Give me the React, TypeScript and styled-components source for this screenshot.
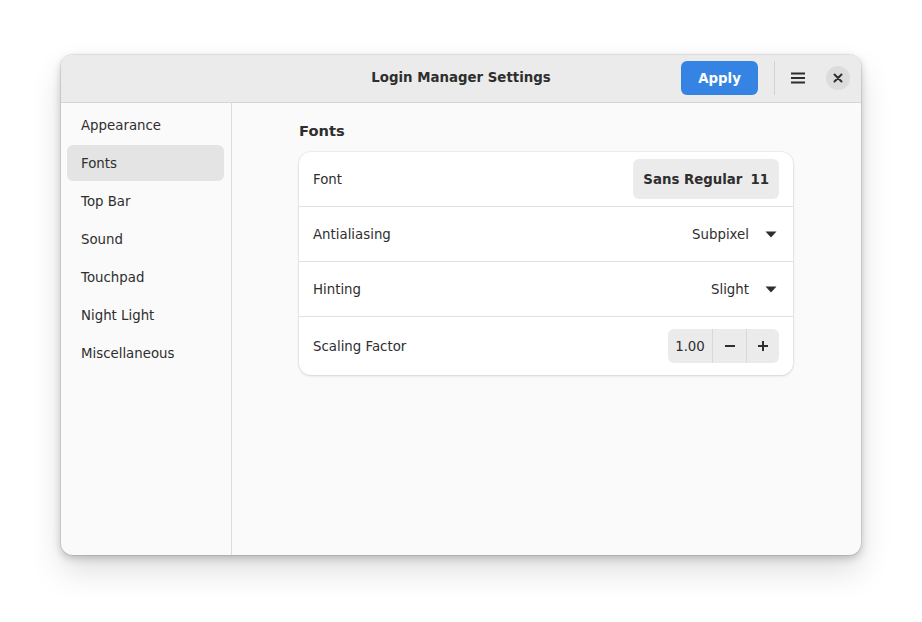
import React, { FC, useState } from 'react';
import styled, { createGlobalStyle } from 'styled-components';

const GlobalStyle = createGlobalStyle`
	html, body {
		margin: 0;
		padding: 0;
		background: #ffffff;
	}
	body {
		font-family: 'DejaVu Sans', 'Liberation Sans', sans-serif;
		font-size: 10pt;
		color: #2e2e2e;
	}
`;

const navItems = ['Appearance', 'Fonts', 'Top Bar', 'Sound', 'Touchpad', 'Night Light', 'Miscellaneous'];

const App: FC = () => {
	const [active, setActive] = useState<string>('Fonts');
	const [scale, setScale] = useState<number>(1);

	return (
		<>
			<GlobalStyle />
			<Page>
				<Window>
					<HeaderBar>
						<Title>Login Manager Settings</Title>
						<HeaderActions>
							<ApplyButton>Apply</ApplyButton>
							<HeaderSeparator />
							<IconButton aria-label="Menu">
								<svg width="16" height="16" viewBox="0 0 16 16">
									<rect x="1" y="2.5" width="14" height="2" fill="#2e2e2e" />
									<rect x="1" y="7" width="14" height="2" fill="#2e2e2e" />
									<rect x="1" y="11.5" width="14" height="2" fill="#2e2e2e" />
								</svg>
							</IconButton>
							<CloseButton aria-label="Close">
								<svg width="10" height="10" viewBox="0 0 10 10">
									<path d="M1.5 1.5 L8.5 8.5 M8.5 1.5 L1.5 8.5" stroke="#2e2e2e" strokeWidth="2" strokeLinecap="round" />
								</svg>
							</CloseButton>
						</HeaderActions>
					</HeaderBar>
					<Body>
						<Sidebar>
							{navItems.map((el) => (
								<NavItem key={el} $active={el === active} onClick={() => setActive(el)}>
									{el}
								</NavItem>
							))}
						</Sidebar>
						<Content>
							<Section>
								<SectionTitle>Fonts</SectionTitle>
								<Card>
									<Row $height={54}>
										<RowLabel>Font</RowLabel>
										<FontButton>
											<span>Sans Regular</span>
											<span>11</span>
										</FontButton>
									</Row>
									<Row $height={54}>
										<RowLabel>Antialiasing</RowLabel>
										<Dropdown>
											Subpixel
											<Arrow />
										</Dropdown>
									</Row>
									<Row $height={54}>
										<RowLabel>Hinting</RowLabel>
										<Dropdown>
											Slight
											<Arrow />
										</Dropdown>
									</Row>
									<Row $height={58}>
										<RowLabel>Scaling Factor</RowLabel>
										<SpinButton>
											<SpinValue>{scale.toFixed(2)}</SpinValue>
											<SpinStep onClick={() => setScale((s) => Math.max(0.5, s - 0.25))}>
												<svg width="12" height="12" viewBox="0 0 12 12">
													<rect x="1" y="5" width="10" height="2" fill="#2e2e2e" />
												</svg>
											</SpinStep>
											<SpinStep onClick={() => setScale((s) => Math.min(3, s + 0.25))}>
												<svg width="12" height="12" viewBox="0 0 12 12">
													<rect x="1" y="5" width="10" height="2" fill="#2e2e2e" />
													<rect x="5" y="1" width="2" height="10" fill="#2e2e2e" />
												</svg>
											</SpinStep>
										</SpinButton>
									</Row>
								</Card>
							</Section>
						</Content>
					</Body>
				</Window>
			</Page>
		</>
	);
};

export default App;

const Arrow: FC = () => (
	<svg width="12" height="7" viewBox="0 0 12 7">
		<path d="M0.5 0.5 L11.5 0.5 L6 6.5 Z" fill="#2e2e2e" />
	</svg>
);

const Page = styled.div`
	padding: 55px 0 0 61px;
	height: 622px;
	box-sizing: border-box;
`;

const Window = styled.div`
	width: 800px;
	height: 500px;
	display: flex;
	flex-direction: column;
	background: #fafafa;
	border-radius: 12px;
	overflow: hidden;
	box-shadow: 0 16px 32px rgba(0, 0, 0, 0.13), 0 3px 8px rgba(0, 0, 0, 0.22), 0 0 0 1px rgba(0, 0, 0, 0.08);
`;

const HeaderBar = styled.div`
	position: relative;
	height: 46px;
	flex: none;
	display: flex;
	align-items: center;
	justify-content: flex-end;
	background: #ebebeb;
	border-bottom: 1px solid #d6d6d6;
	padding: 0 11px 1px 6px;
`;

const Title = styled.div`
	position: absolute;
	left: 0;
	right: 0;
	top: 14px;
	line-height: 18px;
	text-align: center;
	font-weight: bold;
	font-size: 10pt;
	color: #2e2e2e;
	pointer-events: none;
`;

const HeaderActions = styled.div`
	display: flex;
	align-items: center;
	z-index: 1;
`;

const ApplyButton = styled.button`
	width: 77px;
	height: 34px;
	border: none;
	border-radius: 6px;
	background: #3584e4;
	color: #ffffff;
	font-family: inherit;
	font-size: 10pt;
	font-weight: bold;
	cursor: pointer;
`;

const HeaderSeparator = styled.div`
	width: 1px;
	height: 34px;
	background: #d3d3d3;
	margin: 0 7px 0 16px;
`;

const IconButton = styled.button`
	width: 32px;
	height: 32px;
	border: none;
	background: transparent;
	display: flex;
	align-items: center;
	justify-content: center;
	padding: 0;
	border-radius: 6px;
	cursor: pointer;
`;

const CloseButton = styled.button`
	width: 24px;
	height: 24px;
	margin-left: 12px;
	border: none;
	border-radius: 50%;
	background: #dcdcdc;
	display: flex;
	align-items: center;
	justify-content: center;
	padding: 0;
	cursor: pointer;
`;

const Body = styled.div`
	flex: 1;
	display: flex;
	min-height: 0;
`;

const Sidebar = styled.nav`
	width: 171px;
	flex: none;
	box-sizing: border-box;
	border-right: 1px solid #dcdcdc;
	padding: 4px 7px 4px 6px;
	display: flex;
	flex-direction: column;
	gap: 2px;
`;

const NavItem = styled.div<{ $active: boolean }>`
	height: 36px;
	display: flex;
	align-items: center;
	padding: 0 14px;
	border-radius: 6px;
	background: ${(p) => (p.$active ? '#e4e4e4' : 'transparent')};
	color: #2e2e2e;
	cursor: pointer;
`;

const Content = styled.main`
	flex: 1;
	display: flex;
	justify-content: center;
	padding: 18px 1px 0 0;
`;

const Section = styled.section`
	width: 494px;
	display: flex;
	flex-direction: column;
`;

const SectionTitle = styled.h2`
	margin: 0 0 12px;
	font-size: 14.67px;
	font-weight: bold;
	line-height: 19px;
	color: #2e2e2e;
`;

const Card = styled.div`
	background: #ffffff;
	border-radius: 12px;
	box-shadow: 0 1px 3px rgba(0, 0, 0, 0.12), 0 0 0 1px rgba(0, 0, 0, 0.04);
	overflow: hidden;
`;

const Row = styled.div<{ $height: number }>`
	height: ${(p) => p.$height}px;
	display: flex;
	align-items: center;
	justify-content: space-between;
	padding: 0 14px;
	border-bottom: 1px solid #e0e0e0;

	&:last-child {
		border-bottom: none;
	}
`;

const RowLabel = styled.span`
	color: #2e2e2e;
`;

const FontButton = styled.button`
	height: 40px;
	display: flex;
	align-items: center;
	gap: 8px;
	padding: 0 10px;
	border: none;
	border-radius: 6px;
	background: #ebebeb;
	font-family: inherit;
	font-size: 10pt;
	font-weight: bold;
	color: #2e2e2e;
	cursor: pointer;
`;

const Dropdown = styled.div`
	display: flex;
	align-items: center;
	gap: 16px;
	padding-right: 2px;
	color: #2e2e2e;
	cursor: pointer;
`;

const SpinButton = styled.div`
	height: 34px;
	display: flex;
	background: #ebebeb;
	border-radius: 6px;
	overflow: hidden;
`;

const SpinValue = styled.div`
	width: 44px;
	display: flex;
	align-items: center;
	justify-content: center;
	color: #2e2e2e;
	border-right: 1px solid #d8d8d8;
`;

const SpinStep = styled.button`
	width: 33px;
	border: none;
	background: transparent;
	display: flex;
	align-items: center;
	justify-content: center;
	padding: 0;
	cursor: pointer;

	& + & {
		border-left: 1px solid #d8d8d8;
	}
`;
